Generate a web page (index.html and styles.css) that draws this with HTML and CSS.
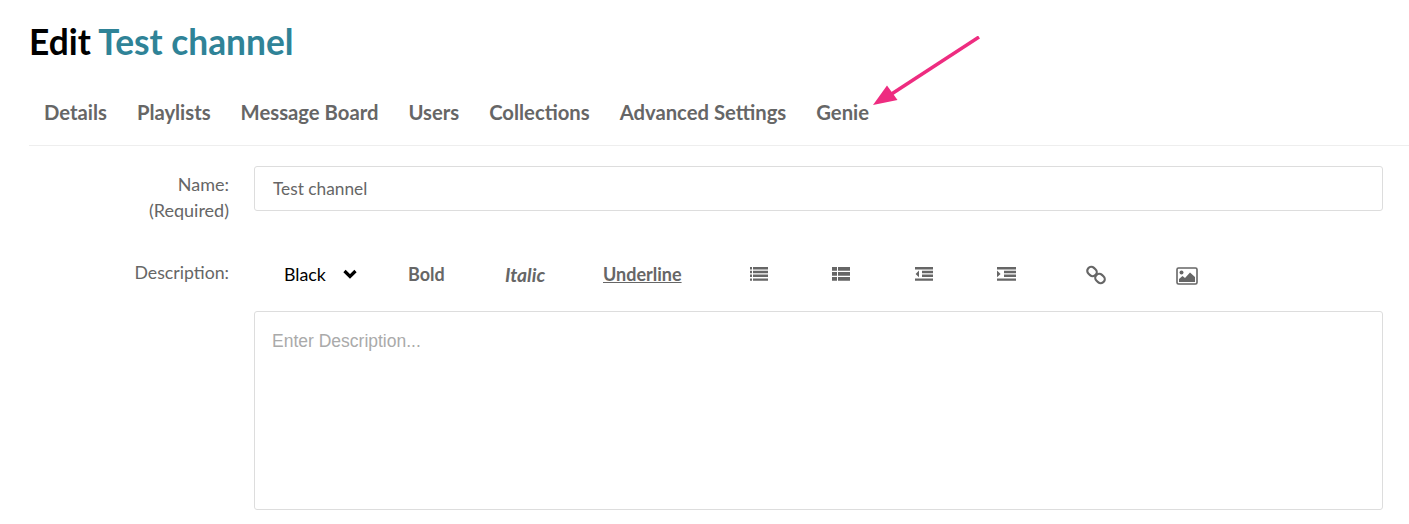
FILE: index.html
```html
<!DOCTYPE html>
<html lang="en">
<head>
<meta charset="utf-8">
<title>Edit Test channel</title>
<link rel="stylesheet" href="styles.css">
</head>
<body>
<main class="page">
  <h1 class="title">Edit <a class="title-link">Test channel</a></h1>
  <nav class="tabs">
    <a class="tab">Details</a>
    <a class="tab">Playlists</a>
    <a class="tab">Message Board</a>
    <a class="tab">Users</a>
    <a class="tab">Collections</a>
    <a class="tab">Advanced Settings</a>
    <a class="tab">Genie</a>
  </nav>
  <form class="form">
    <div class="row row-name">
      <label class="label">Name:<br>(Required)</label>
      <div class="field"><div class="input">Test channel</div></div>
    </div>
    <div class="row row-desc">
      <label class="label label-desc">Description:</label>
      <div class="field">
        <div class="toolbar">
          <span class="tool tool-color">Black
            <svg class="chev" viewBox="0 0 14 10" width="14" height="10"><path d="M1.500 2 7 7.500 12.500 2" fill="none" stroke="#000" stroke-width="3.200"/></svg>
          </span>
          <span class="tool tool-bold">Bold</span>
          <span class="tool tool-italic">Italic</span>
          <span class="tool tool-under">Underline</span>
          <span class="icon icon-ul"><svg viewBox="0 0 18 14" width="18" height="14"><path fill="#666" d="M0 0h2v2.400H0zM3 0h15v2.400H3zM0 3.800h2v2.400H0zM3 3.800h15v2.400H3zM0 7.600h2V10H0zM3 7.600h15V10H3zM0 11.400h2v2.400H0zM3 11.400h15v2.400H3z"/></svg></span>
          <span class="icon icon-ol"><svg viewBox="0 0 18 14" width="18" height="14"><path fill="#666" d="M0 0h5v3.800H0zM6 0h12v3.800H6zM0 5h5v3.800H0zM6 5h12v3.800H6zM0 10h5v3.800H0zM6 10h12v3.800H6z"/></svg></span>
          <span class="icon icon-out"><svg viewBox="0 0 18 14" width="18" height="14"><path fill="#666" d="M0 0h18v2.400H0zM7 3.800h11v2.400H7zM7 7.600h11V10H7zM0 11.400h18v2.400H0zM4 3.500v6.800L.6 6.900z"/></svg></span>
          <span class="icon icon-in"><svg viewBox="0 0 19 14" width="19" height="14"><path fill="#666" d="M0 0h19v2.400H0zM7 3.800h12v2.400H7zM7 7.600h12V10H7zM0 11.400h19v2.400H0zM0 3.500v6.800l3.600-3.400z"/></svg></span>
          <span class="icon icon-link"><svg viewBox="0 0 20 20" width="20" height="20"><g fill="none" stroke="#666" stroke-width="2.200"><rect x="1" y="2.500" width="10" height="8" rx="4" transform="rotate(42 6 6.500)"/><rect x="9" y="9.500" width="10" height="8" rx="4" transform="rotate(42 14 13.500)"/></g></svg></span>
          <span class="icon icon-img"><svg viewBox="0 0 22 18" width="22" height="18"><rect x="1" y="1" width="20" height="16" rx="1.500" fill="none" stroke="#666" stroke-width="1.600"/><circle cx="5.500" cy="5.500" r="2" fill="#666"/><path fill="#666" d="M3 15v-3l3.500-3 2.500 2 5-5.500 5 4.500v5z"/></svg></span>
        </div>
        <div class="editor">Enter Description...</div>
      </div>
    </div>
  </form>
  <svg class="arrow" viewBox="0 0 120 80" width="120" height="80"><path d="M119 1 30 59" stroke="#ee2c80" stroke-width="3.500" fill="none"/><path fill="#ee2c80" d="M13 69 27 49.500 37.500 64z"/></svg>
</main>
</body>
</html>
```
FILE: styles.css
```css
* { box-sizing: border-box; }
html, body { margin: 0; height: 524px; overflow: hidden; background: #fff; }
body { font-family: Lato, sans-serif; color: #666; }
.page { position: relative; padding: 19px 0 0 29px; }
.title { margin: 0; font-size: 35.300px; line-height: 46px; font-weight: 700; color: #000; }
.title-link { color: #2f8397; }
.tabs { display: flex; gap: 30px; margin-top: 13px; padding: 20px 15px 18px; height: 68px; border-bottom: 1px solid #eee; font-size: 20.250px; line-height: 28px; font-weight: 700; color: #666; }
.tab { display: block; }
.form { padding-right: 26px; margin-top: 20px; }
.row { display: flex; }
.label { width: 200px; flex: none; text-align: right; font-size: 18px; line-height: 25.500px; padding-top: 6px; }
.field { flex: 1; margin-left: 25px; min-width: 0; }
.row-desc { margin-top: 32px; }
.input { height: 45px; border: 1px solid #ddd; border-radius: 3px; padding: 0 18px; font-size: 17.300px; line-height: 43px; color: #666; }
.label-desc { padding-top: 5px; font-size: 17.700px; }
.toolbar { height: 56px; padding-bottom: 18px; display: flex; align-items: center; font-size: 18px; font-weight: 700; }
.tool { flex: none; display: block; }
.tool-color { width: 154px; padding-left: 30px; font-size: 17.800px; font-weight: 400; color: #000; display: flex; align-items: center; }
.chev { margin-left: 17px; }
.tool-bold { width: 97px; }
.tool-italic { width: 98px; font-style: italic; font-size: 19.300px; }
.tool-under { width: 147px; text-decoration: underline; font-size: 18px; }
.icon { flex: none; display: flex; }
.icon-ul { width: 82px; }
.icon-ol { width: 83px; }
.icon-out { width: 82px; }
.icon-in { width: 89px; }
.icon-link { width: 90px; margin-top: 2px; }
.icon-img { margin-top: 3px; }
.icon svg { display: block; }
.editor { height: 199px; border: 1px solid #ddd; border-radius: 3px; padding: 19px 17px; font-family: "Liberation Sans", Arial, sans-serif; font-size: 17.500px; line-height: 20px; color: #aaa; }
.arrow { position: absolute; left: 860px; top: 36px; }
```
